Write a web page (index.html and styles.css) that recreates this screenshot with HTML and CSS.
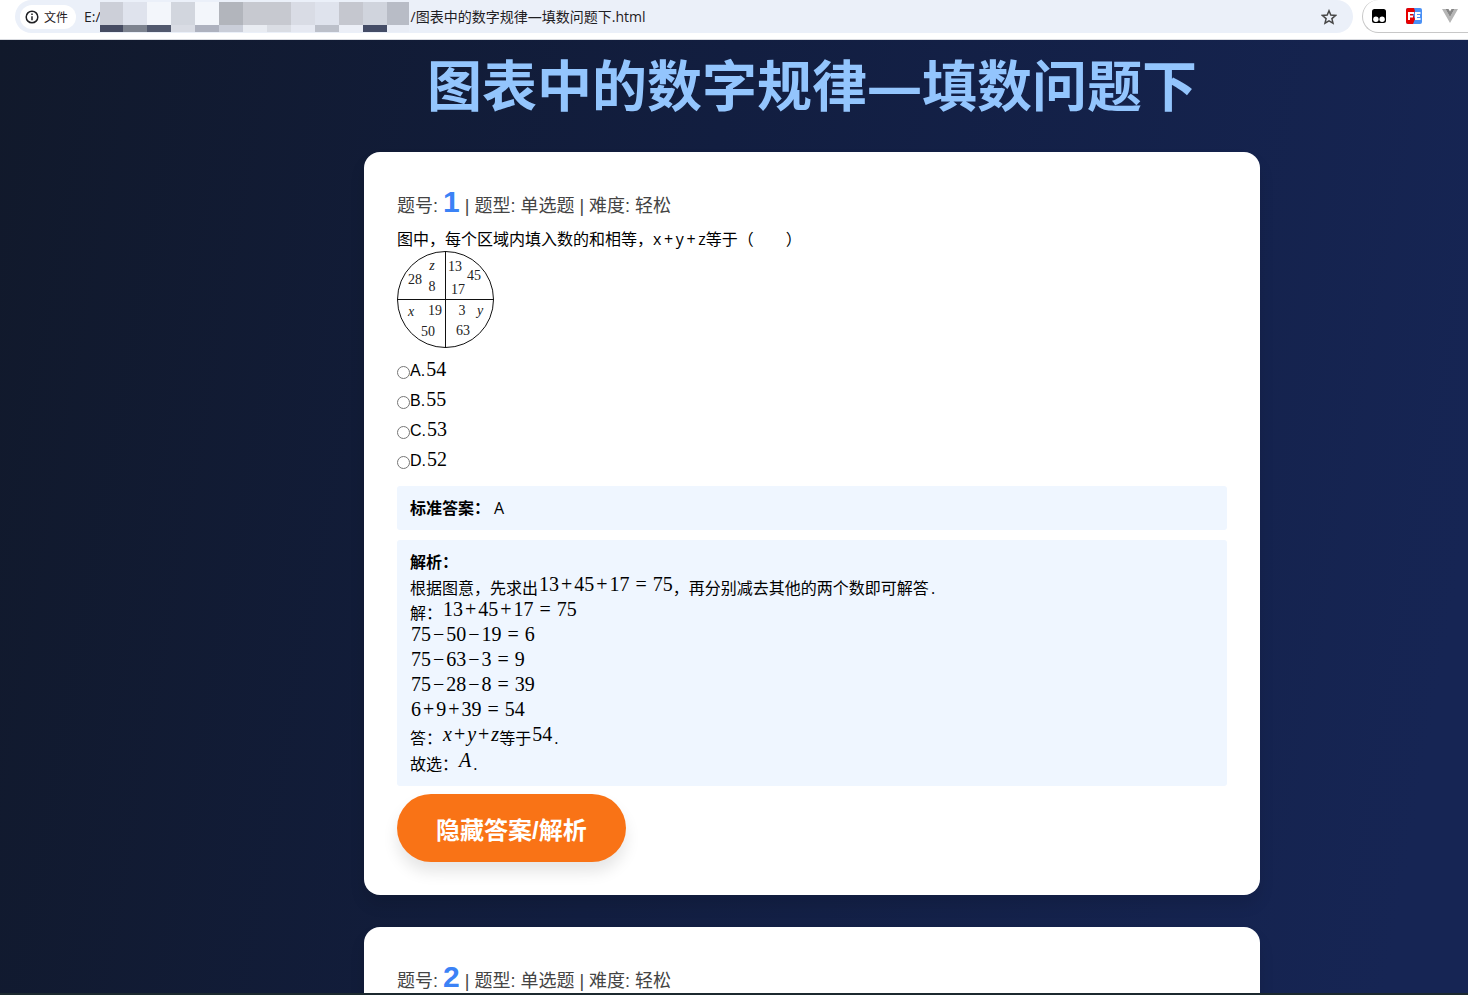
FILE: index.html
```html
<!DOCTYPE html>
<html lang="zh-CN">
<head>
  <meta charset="UTF-8">
  <meta name="viewport" content="width=device-width, initial-scale=1.0">
  <title>图表中的数字规律—填数问题下</title>
  <link rel="stylesheet" href="styles.css">
</head>
<body>
  <!-- Browser bar -->
  <header class="toolbar">
    <div class="omnibox">
      <button class="file-chip" type="button">
        <svg width="14" height="14" viewBox="0 0 14 14" fill="none" stroke="#1f2023" stroke-width="1.5">
          <circle cx="7" cy="7" r="5.8"/>
          <path d="M7 6.2v4M7 3.6v1.5"/>
        </svg>
        文件
      </button>
      <div class="address">
        <span>E:/</span>
        <svg class="mosaic" width="309" height="30" viewBox="0 0 309 30" shape-rendering="crispEdges">
          <rect x="0" y="0" width="23" height="23" fill="#cccfd8"/>
          <rect x="23" y="0" width="24" height="23" fill="#dfe3ed"/>
          <rect x="47" y="0" width="24" height="23" fill="#f3f6fb"/>
          <rect x="71" y="0" width="24" height="23" fill="#d2d6de"/>
          <rect x="95" y="0" width="24" height="23" fill="#f3f6fb"/>
          <rect x="119" y="0" width="24" height="23" fill="#b2b5bc"/>
          <rect x="143" y="0" width="48" height="23" fill="#c7c9d0"/>
          <rect x="191" y="0" width="24" height="23" fill="#d9dce5"/>
          <rect x="215" y="0" width="24" height="23" fill="#dfe3ed"/>
          <rect x="239" y="0" width="24" height="23" fill="#c5c7cf"/>
          <rect x="263" y="0" width="24" height="23" fill="#d0d4dd"/>
          <rect x="287" y="0" width="22" height="23" fill="#b8bcc6"/>
          <rect x="0" y="23" width="23" height="7" fill="#464c62"/>
          <rect x="23" y="23" width="24" height="7" fill="#7d838f"/>
          <rect x="47" y="23" width="24" height="7" fill="#52596e"/>
          <rect x="71" y="23" width="24" height="7" fill="#d9dce4"/>
          <rect x="95" y="23" width="24" height="7" fill="#aeb2bf"/>
          <rect x="119" y="23" width="24" height="7" fill="#caced9"/>
          <rect x="143" y="23" width="24" height="7" fill="#e9ecf2"/>
          <rect x="167" y="23" width="24" height="7" fill="#dadde4"/>
          <rect x="191" y="23" width="24" height="7" fill="#e6e9f2"/>
          <rect x="215" y="23" width="24" height="7" fill="#bcc0ca"/>
          <rect x="239" y="23" width="24" height="7" fill="#eceff7"/>
          <rect x="263" y="23" width="24" height="7" fill="#444c66"/>
          <rect x="287" y="23" width="22" height="7" fill="#e9edf6"/>
        </svg>
        <span>/图表中的数字规律—填数问题下.html</span>
      </div>
      <button class="star" type="button" aria-label="收藏">
        <svg width="16" height="16" viewBox="0 0 16 16" fill="none" stroke="#474747" stroke-width="1.5">
          <path d="M8 1.8l1.8 4.3 4.7.4-3.6 3.1 1.1 4.6L8 11.8l-4 2.4 1.1-4.6-3.6-3.1 4.7-.4z"/>
        </svg>
      </button>
    </div>
    <div class="extensions">
      <svg width="14" height="14" viewBox="0 0 14 14">
        <rect width="14" height="14" rx="2.5" fill="#000"/>
        <circle cx="3.9" cy="10.2" r="2.7" fill="#fff"/>
        <circle cx="10.1" cy="10.2" r="2.7" fill="#fff"/>
      </svg>
      <svg width="16" height="16" viewBox="0 0 16 16">
        <rect width="16" height="16" rx="2" fill="#4a90f5"/>
        <path d="M2 0h6l1 3-2 4 2 4-2 5H2a2 2 0 0 1-2-2V2a2 2 0 0 1 2-2z" fill="#e60000"/>
        <path d="M3 12V5h5M3 8.500h4M14.500 5H10v6h4.500M10 8h4" fill="none" stroke="#fff" stroke-width="2"/>
      </svg>
      <svg width="16" height="14" viewBox="0 0 16 14">
        <path d="M0 0h3.500L8 8l4.500-8H16L8 14z" fill="#b5b5b5"/>
        <path d="M3.500 0H6.500L8 2.600 9.500 0h3L8 8z" fill="#858585"/>
      </svg>
    </div>
  </header>

  <main class="page">
    <h1>图表中的数字规律—填数问题下</h1>

    <section class="card">
      <div class="meta">题号: <span class="number">1</span> | 题型: 单选题 | 难度: 轻松</div>
      <div class="question">图中，每个区域内填入数的和相等，x&thinsp;+&thinsp;y&thinsp;+&thinsp;z等于（　　）</div>
      <svg class="pie" width="98" height="98" viewBox="0 0 98 98">
        <g fill="none" stroke="#111">
          <circle cx="48.500" cy="48.500" r="48"/>
          <path d="M48.500 0v97M0 48.500h97"/>
        </g>
        <g class="pie-text">
          <text x="35" y="19" class="var">z</text>
          <text x="18" y="33">28</text>
          <text x="35" y="40">8</text>
          <text x="58" y="20">13</text>
          <text x="77" y="29">45</text>
          <text x="61" y="43">17</text>
          <text x="14" y="65" class="var">x</text>
          <text x="38" y="64">19</text>
          <text x="31" y="85">50</text>
          <text x="65" y="64">3</text>
          <text x="83" y="64" class="var">y</text>
          <text x="66" y="84">63</text>
        </g>
      </svg>

      <div class="options">
        <label><input type="radio" name="q1" value="A">A.<span class="math">54</span></label>
        <label><input type="radio" name="q1" value="B">B.<span class="math">55</span></label>
        <label><input type="radio" name="q1" value="C">C.<span class="math">53</span></label>
        <label><input type="radio" name="q1" value="D">D.<span class="math">52</span></label>
      </div>

      <div class="answer"><strong>标准答案：</strong><span class="key">A</span></div>

      <div class="answer analysis">
        <strong>解析：</strong>
        <p>根据图意，先求出<span class="math">13<i>+</i>45<i>+</i>17<b>=</b>75</span>，再分别减去其他的两个数即可解答<span class="dot">.</span></p>
        <p>解：<span class="math">13<i>+</i>45<i>+</i>17<b>=</b>75</span></p>
        <p><span class="math">75<i>−</i>50<i>−</i>19<b>=</b>6</span></p>
        <p><span class="math">75<i>−</i>63<i>−</i>3<b>=</b>9</span></p>
        <p><span class="math">75<i>−</i>28<i>−</i>8<b>=</b>39</span></p>
        <p><span class="math">6<i>+</i>9<i>+</i>39<b>=</b>54</span></p>
        <p class="reply">答：<span class="math"><em>x</em><i>+</i><em>y</em><i>+</i><em>z</em></span>等于<span class="math">54</span><span class="dot">.</span></p>
        <p>故选：<span class="math"><em>A</em></span><span class="dot">.</span></p>
      </div>

      <button class="toggle" type="button">隐藏答案/解析</button>
    </section>

    <section class="card">
      <div class="meta">题号: <span class="number">2</span> | 题型: 单选题 | 难度: 轻松</div>
    </section>
  </main>

  <footer class="taskbar"></footer>
</body>
</html>
```

FILE: styles.css
```css
* {
  box-sizing: border-box;
}
body {
  margin: 0;
  height: 100vh;
  display: flex;
  flex-direction: column;
  overflow: hidden;
  font-family: "Open Sans", "Noto Sans CJK SC", sans-serif;
  font-size: 16px;
  color: #000;
}
button {
  border: none;
  background: none;
  padding: 0;
  font-family: inherit;
  cursor: pointer;
}

/* Browser bar */
.toolbar {
  flex: none;
  display: flex;
  align-items: flex-start;
  gap: 9px;
  height: 40px;
  padding-left: 15px;
  background-color: #fff;
  border-bottom: 1px solid #d9dbe0;
}
.omnibox {
  flex: 1;
  display: flex;
  align-items: center;
  height: 33px;
  padding: 0 16px 0 5px;
  border-radius: 17px;
  background-color: #ebf0f9;
}
.file-chip {
  display: flex;
  align-items: center;
  gap: 5px;
  height: 24px;
  padding: 0 8px 0 5px;
  border-radius: 12px;
  background-color: #fff;
  font-size: 12px;
  color: #1f2023;
}
.address {
  flex: 1;
  display: flex;
  align-items: center;
  margin-left: 8px;
  font-size: 14px;
  line-height: 30px;
  color: #1f2023;
  white-space: nowrap;
}
.mosaic {
  margin: 1px 2px 0 -1px;
}
.star svg,
.extensions svg {
  display: block;
}
.extensions {
  flex: none;
  display: flex;
  align-items: center;
  gap: 20px;
  width: 106px;
  height: 33px;
  padding-left: 9px;
  border: 1px solid #c7c7c7;
  border-width: 0 0 1px 1px;
  border-radius: 17px 0 0 17px;
  overflow: hidden;
}

/* Quiz page */
.page {
  flex: 1;
  min-height: 0;
  overflow: hidden;
  padding-left: 156px;
  background: linear-gradient(100deg, #11192b, #121e40 45%, #162554 95%);
}
h1 {
  margin: 0 0 22px;
  text-align: center;
  font-size: 55px;
  font-weight: 700;
  line-height: 90px;
  color: #93c5fd;
}
.card {
  max-width: 896px;
  margin: 0 auto 32px;
  padding: 33px;
  border-radius: 16px;
  background-color: #fff;
  box-shadow: 0 10px 15px rgba(0, 0, 0, 0.1);
}
.meta {
  height: 42px;
  line-height: 42px;
  font-family: "Liberation Sans", "Noto Sans CJK SC", sans-serif;
  font-size: 18px;
  color: #444;
}
.number {
  font-size: 30px;
  font-weight: 700;
  line-height: 1;
  color: #3b82f6;
}
.question {
  line-height: 24px;
}
.pie {
  display: block;
}
.pie-text {
  font-family: "Liberation Serif", serif;
  font-size: 14px;
  text-anchor: middle;
  fill: #222;
}
.var {
  font-style: italic;
}

.options {
  margin: 7px 0 10px;
  font-family: "Liberation Sans", sans-serif;
}
.options label {
  display: flex;
  align-items: center;
  height: 30px;
}
.options input {
  width: 13px;
  height: 13px;
  margin: 2px 0 0;
}
.options .math {
  margin-bottom: 4px;
}

.answer {
  margin-bottom: 10px;
  padding: 10px 13px;
  border-radius: 3px;
  background-color: #eff6ff;
  line-height: 24px;
}
.key {
  margin-left: 4px;
}
.analysis {
  margin-bottom: 8px;
}
.analysis strong {
  display: block;
}
.analysis p {
  margin: 0;
  height: 25px;
  line-height: 24px;
}
.analysis .reply {
  height: 26px;
  line-height: 26px;
}
.analysis p:last-child {
  height: 26px;
}
.dot {
  margin-left: 2px;
}

/* Formulas sit a little above the text line */
.math {
  margin-left: 1px;
  font-family: "Liberation Serif", serif;
  font-size: 20px;
  line-height: 1;
  vertical-align: 3px;
}
.math i {
  margin: 0 2px;
  font-style: normal;
}
.math b {
  margin: 0 6px;
  font-weight: 400;
}

.toggle {
  display: block;
  height: 68px;
  padding: 0 39px;
  border-radius: 34px;
  background-color: #f97316;
  color: #fff;
  font-family: "Liberation Sans", "Noto Sans CJK SC", sans-serif;
  font-size: 24px;
  font-weight: 700;
  box-shadow: 0 10px 15px rgba(0, 0, 0, 0.1);
}

.taskbar {
  flex: none;
  height: 2px;
  background-color: #1c292f;
}
```
